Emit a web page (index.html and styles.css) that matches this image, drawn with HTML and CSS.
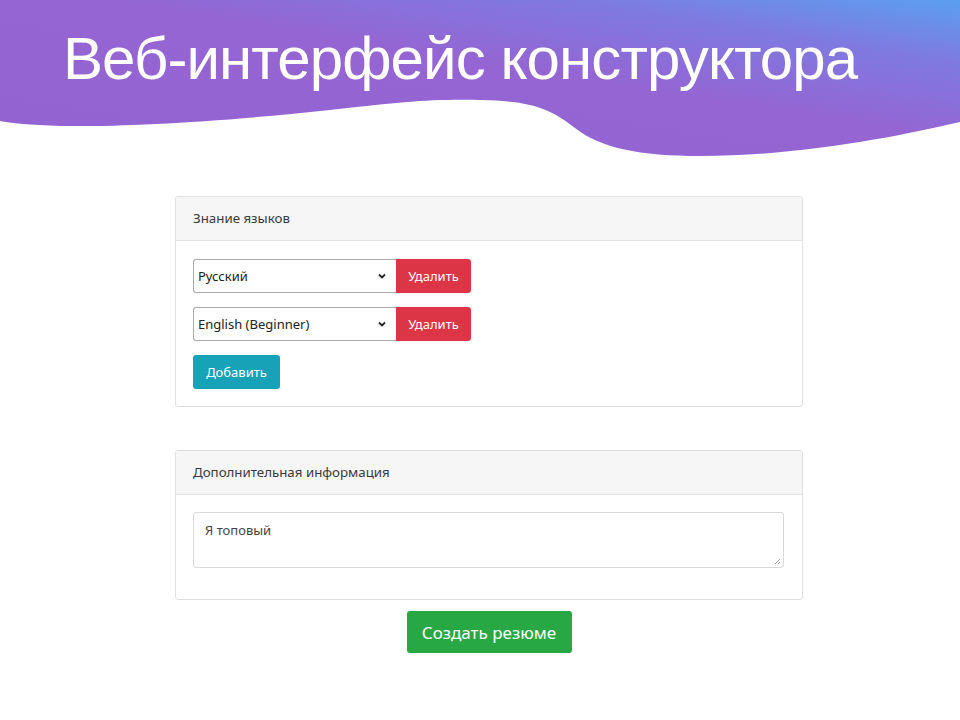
FILE: index.html
```html
<!DOCTYPE html>
<html lang="ru">
<head>
<meta charset="utf-8">
<title>Веб-интерфейс конструктора</title>
<link rel="stylesheet" href="styles.css">
</head>
<body>
<header class="hero">
  <svg class="wave" viewBox="0 0 960 160" preserveAspectRatio="none" aria-hidden="true">
    <defs>
      <linearGradient id="g" x1="0" y1="1" x2="1" y2="0" gradientUnits="objectBoundingBox">
        <stop offset="0" stop-color="#9463d3"/>
        <stop offset="0.55" stop-color="#9465d3"/>
        <stop offset="0.8" stop-color="#7f7ae0"/>
        <stop offset="1" stop-color="#5a9ff0"/>
      </linearGradient>
    </defs>
    <path fill="url(#g)" d="M0,0 H960 V122 C900,136 800,156 700,156 C640,156 600,148 575,128 C550,108 530,101 480,100 C430,99 400,102 330,110 C220,122 120,127 60,126 C30,125 10,123 0,121 Z"/>
  </svg>
  <h1 class="title">Веб-интерфейс конструктора</h1>
</header>

<main class="content">
  <section class="card">
    <div class="card-header">Знание языков</div>
    <div class="card-body">
      <div class="lang-row">
        <div class="select">Русский<span class="chev"><svg width="8" height="6" viewBox="0 0 8 6"><path d="M1 1.5 L4 4.5 L7 1.5" fill="none" stroke="#222" stroke-width="1.8"/></svg></span></div>
        <button class="btn btn-danger">Удалить</button>
      </div>
      <div class="lang-row">
        <div class="select">English (Beginner)<span class="chev"><svg width="8" height="6" viewBox="0 0 8 6"><path d="M1 1.5 L4 4.5 L7 1.5" fill="none" stroke="#222" stroke-width="1.8"/></svg></span></div>
        <button class="btn btn-danger">Удалить</button>
      </div>
      <button class="btn btn-info">Добавить</button>
    </div>
  </section>

  <section class="card card-second">
    <div class="card-header">Дополнительная информация</div>
    <div class="card-body card-body-info">
      <div class="textarea">Я топовый
        <svg class="grip" width="7" height="7" viewBox="0 0 7 7"><path d="M6 1 L1 6 M6 4 L4 6" stroke="#999" stroke-width="1"/></svg>
      </div>
    </div>
  </section>

  <div class="submit-row">
    <button class="btn btn-success">Создать резюме</button>
  </div>
</main>
</body>
</html>
```

FILE: styles.css
```css
* { box-sizing: border-box; }
html, body { margin: 0; padding: 0; background: #fff; }
body {
  width: 960px;
  height: 720px;
  overflow: hidden;
  font-family: "Noto Sans", "Open Sans", sans-serif;
  color: #333;
}
.hero {
  position: relative;
  height: 160px;
}
.wave {
  position: absolute;
  left: 0;
  top: 0;
  width: 960px;
  height: 160px;
  display: block;
}
.title {
  position: relative;
  margin: 0;
  padding: 24px 0 0 63px;
  font-family: "Liberation Sans", Arial, sans-serif;
  font-weight: 400;
  font-size: 60px;
  line-height: 70px;
  color: #fff;
  letter-spacing: -0.9px;
}
.content {
  width: 628px;
  margin: 36px auto 0 175px;
}
.card {
  border: 1px solid #dfdfdf;
  border-radius: 3px;
  background: #fff;
}
.card-second { margin-top: 43px; }
.card-header {
  height: 44px;
  background: #f6f6f6;
  border-bottom: 1px solid #e2e2e2;
  padding: 0 17px;
  font-size: 13.3px;
  line-height: 43px;
  color: #3a3a3a;
}
.card-body {
  padding: 18px 17px 17px;
  display: flex;
  flex-direction: column;
  align-items: flex-start;
  gap: 14px;
}
.lang-row {
  display: flex;
  height: 34px;
}
.select {
  width: 203px;
  height: 34px;
  border: 1px solid #aaa;
  border-right: none;
  border-radius: 3px 0 0 3px;
  padding: 0 0 0 4px;
  display: flex;
  align-items: center;
  justify-content: space-between;
  font-size: 13px;
  color: #222;
}
.chev { width: 18px; display: flex; align-items: center; }
.btn {
  border: none;
  font-family: "Noto Sans", "Open Sans", sans-serif;
  color: #fff;
  cursor: pointer;
  border-radius: 3px;
}
.btn-danger {
  background: #dc3545;
  width: 75px;
  height: 34px;
  font-size: 13px;
  border-radius: 0 3px 3px 0;
  padding: 0;
}
.btn-info {
  background: #17a2b8;
  width: 87px;
  height: 34px;
  font-size: 13px;
  padding: 0;
}
.card-body-info {
  padding: 17px 17px 31px;
}
.textarea {
  position: relative;
  width: 591px;
  height: 56px;
  border: 1px solid #d8d8d8;
  border-radius: 3px;
  padding: 9px 11px;
  font-size: 13px;
  color: #444;
  line-height: 17px;
}
.grip {
  position: absolute;
  right: 2px;
  bottom: 2px;
}
.submit-row {
  display: flex;
  justify-content: center;
  padding-top: 11px;
}
.btn-success {
  background: #28a745;
  width: 165px;
  height: 42px;
  font-size: 17px;
  padding: 0;
}
```
